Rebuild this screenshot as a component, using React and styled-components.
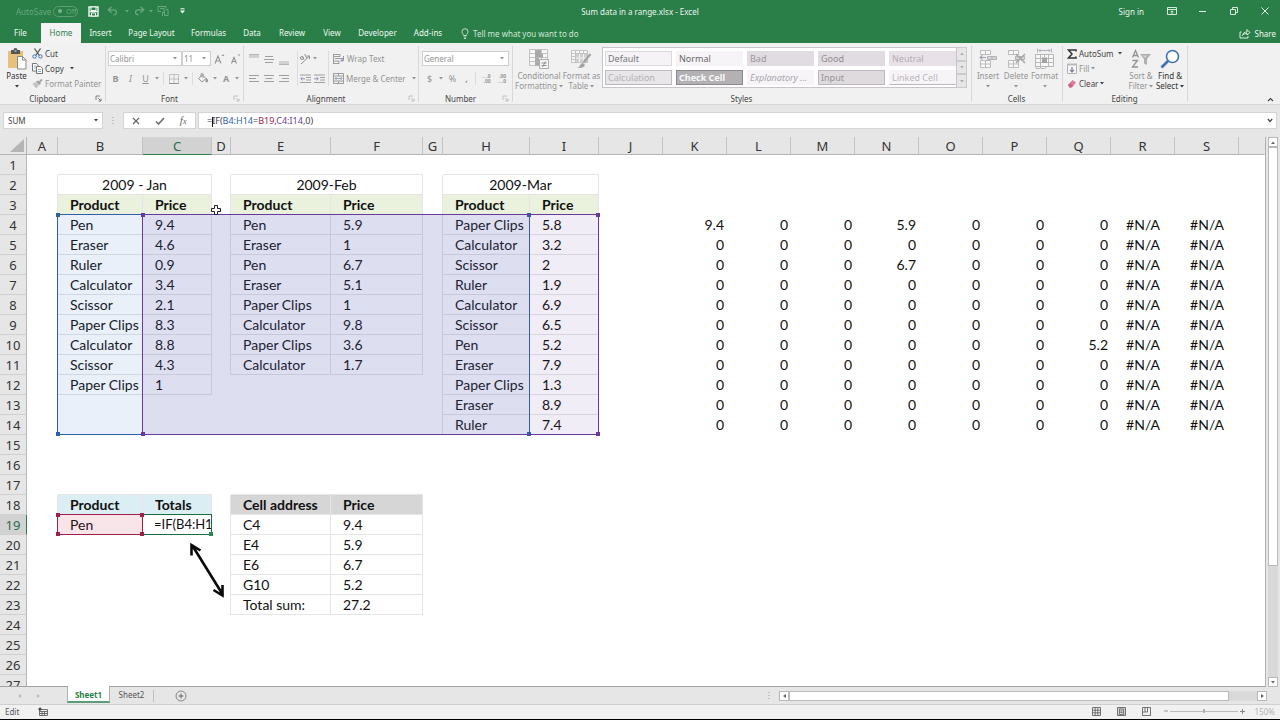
import React, { useState } from 'react';
import styled, { createGlobalStyle, css } from 'styled-components';

const GREEN = '#2a7f48';
const UI_FONT = '"Noto Sans", "Open Sans", sans-serif';
const CELL_FONT = 'Lato, "Open Sans", sans-serif';

const GlobalStyle = createGlobalStyle`
  * { box-sizing: border-box; }
  body {
    margin: 0;
    background: #000;
    font-family: ${UI_FONT};
    font-size: 8px;
    color: #444;
  }
  button, input, select { font: inherit; color: inherit; margin: 0; }
  button { border: none; background: none; padding: 0; cursor: pointer; white-space: nowrap; }
  svg { display: block; flex: none; }
`;

const Window = styled.div`
  display: flex;
  flex-direction: column;
  height: 100vh;
  border-bottom: 1px solid #000;
  background: #e6e6e6;
  overflow: hidden;
`;

/* ---------- title bar ---------- */

const TitleBar = styled.header`
  display: grid;
  grid-template-columns: 1fr auto 1fr;
  align-items: center;
  height: 23px;
  padding-bottom: 1px;
  flex: none;
  background: ${GREEN};
  color: #eaf5ee;
`;

const QuickAccess = styled.div`
  display: flex;
  align-items: center;
  padding-left: 16px;
  color: #69a87e;
`;

const QuickButton = styled.button`
  display: flex;
  align-items: center;
  justify-content: center;
  width: ${p => p.$w || 14}px;
  height: 14px;
  color: ${p => p.$on ? '#f2faf5' : '#69a87e'};
`;

const AutoSave = styled.label`
  display: flex;
  align-items: center;
  gap: 2px;
  margin-right: 8px;
`;

const Toggle = styled.button`
  display: flex;
  align-items: center;
  gap: 4px;
  width: 25px;
  height: 11px;
  padding-left: 4px;
  border: 1px solid #5b9f72;
  border-radius: 6px;
  font-size: 7px;
  line-height: 9px;
  &::before {
    content: '';
    width: 4px;
    height: 4px;
    border-radius: 50%;
    background: #7cb48e;
  }
`;

const WindowButtons = styled.div`
  display: flex;
  justify-content: flex-end;
  align-items: center;
`;

const WindowButton = styled.button`
  display: flex;
  align-items: center;
  justify-content: center;
  width: 31px;
  height: 20px;
`;

const SignIn = styled.a`
  margin-right: 12px;
  color: inherit;
  text-decoration: none;
`;

/* ---------- ribbon tabs ---------- */

const TabBar = styled.nav`
  display: flex;
  height: 20px;
  flex: none;
  background: ${GREEN};
  color: #eef8f1;
`;

const Tab = styled.button`
  width: ${p => p.$w}px;
  height: 20px;
  line-height: 20px;
  text-align: center;
  ${p => p.$active && css`
    background: #f3f3f3;
    color: ${GREEN};
  `}
`;

const TellMe = styled.button`
  display: flex;
  align-items: center;
  gap: 4px;
  margin-left: 10px;
  color: #cfe6d7;
`;

const Share = styled.button`
  display: flex;
  align-items: center;
  gap: 4px;
  margin-left: auto;
  padding-right: 4px;
`;

/* ---------- ribbon ---------- */

const Ribbon = styled.section`
  display: flex;
  flex: none;
  height: 62px;
  background: #f1f1f1;
  border-bottom: 1px solid #d6d6d6;
`;

const Group = styled.div`
  display: flex;
  flex-direction: column;
  flex: none;
  width: ${p => p.$w}px;
  position: relative;
  &::after {
    content: '';
    position: absolute;
    right: 0;
    top: 3px;
    bottom: 2px;
    width: 1px;
    background: #d8d8d8;
  }
`;

const GroupBody = styled.div`
  display: flex;
  flex: 1;
  min-height: 0;
  padding: 3px 0 0 ${p => p.$left || 2}px;
`;

const GroupFooter = styled.div`
  display: flex;
  align-items: center;
  height: 11px;
  padding: 0 2px 0 0;
  span { flex: 1; text-align: center; }
`;

const Launcher = styled.button`
  width: 9px;
  height: 9px;
  color: ${p => p.$on ? '#666' : '#b5b5b5'};
`;

const Stack = styled.div`
  display: flex;
  flex-direction: column;
  width: ${p => p.$w ? `${p.$w}px` : 'auto'};
  padding-left: ${p => p.$pad || 0}px;
`;

const SmallButton = styled.button`
  display: flex;
  align-items: center;
  gap: 2px;
  height: 15px;
  color: ${p => p.$off ? '#939393' : '#444'};
`;

const LargeButton = styled.button`
  display: flex;
  flex-direction: column;
  align-items: center;
  width: ${p => p.$w}px;
  height: 46px;
  line-height: 10px;
  color: ${p => p.$off ? '#939393' : '#333'};
`;

const LargeIcon = styled.span`
  display: flex;
  align-items: center;
  height: 25px;
`;

const Line = styled.span`
  display: flex;
  align-items: center;
  gap: 2px;
  height: 10px;
`;

const TwoRows = styled.div`
  display: grid;
  grid-template-rows: 15px 15px;
  row-gap: 5px;
  margin-top: 5px;
  height: 35px;
  width: ${p => p.$w ? `${p.$w}px` : 'auto'};
  ${p => p.$divided && css`
    border-left: 1px solid #dcdcdc;
    padding-left: ${p.$pad || 0}px;
  `}
`;

const Row = styled.div`
  display: flex;
  align-items: center;
`;

const Tool = styled.button`
  display: flex;
  align-items: center;
  justify-content: center;
  width: ${p => p.$w || 15}px;
  height: 15px;
  color: #959595;
  font-size: 9px;
  font-weight: ${p => p.$bold ? 700 : 400};
  font-style: ${p => p.$italic ? 'italic' : 'normal'};
  text-decoration: ${p => p.$underline ? 'underline' : 'none'};
`;

const Divider = styled.i`
  width: 1px;
  height: 13px;
  margin: 0 2px;
  background: #dcdcdc;
`;

const ComboWrap = styled.label`
  display: flex;
  align-items: center;
  width: ${p => p.$w}px;
  height: 15px;
  padding-right: 4px;
  border: 1px solid #cfcfcf;
  background: #fff;
  color: #939393;
  select {
    flex: 1;
    min-width: 0;
    height: 13px;
    padding: 0 0 0 1px;
    border: none;
    background: none;
    appearance: none;
    outline: none;
  }
`;

const Gallery = styled.div`
  display: grid;
  grid-template-columns: repeat(5, 67px);
  grid-template-rows: 15px 15px;
  gap: 4px;
  width: 355px;
  height: 41px;
  margin: 1px 0 0 2px;
  padding: 3px 2px;
  border: 1px solid #c9c3cb;
  background: #fff;
`;

const StyleSwatch = styled.button`
  padding-left: 2px;
  border: 1px solid ${p => p.$border || p.$bg};
  background: ${p => p.$bg};
  color: ${p => p.$color};
  font-size: 9px;
  line-height: 12px;
  text-align: left;
  font-weight: ${p => p.$bold ? 700 : 400};
  font-style: ${p => p.$italic ? 'italic' : 'normal'};
  ${p => p.$linked && css`border-bottom: 1px solid #bdb6bf;`}
`;

const GalleryScroll = styled.div`
  display: grid;
  grid-template-rows: repeat(3, 1fr);
  width: 10px;
  height: 41px;
  margin-top: 1px;
  button {
    display: flex;
    align-items: center;
    justify-content: center;
    border: 1px solid #cbcbcb;
    border-left: none;
    background: #e6e6e6;
    color: #b0b0b0;
  }
`;

const CollapseButton = styled.button`
  align-self: flex-end;
  margin: 0 6px 2px auto;
`;

/* ---------- formula bar ---------- */

const FormulaBar = styled.section`
  display: flex;
  align-items: center;
  flex: none;
  height: 32px;
  padding: 0 3px 1px;
`;

const NameBox = styled.div`
  display: flex;
  align-items: center;
  width: 100px;
  height: 17px;
  padding-right: 4px;
  border: 1px solid #d4d4d4;
  background: #fff;
  input {
    width: 0;
    flex: 1;
    padding: 0 4px;
    border: none;
    background: none;
    outline: none;
  }
`;

const Dots = styled.span`
  width: 20px;
  text-align: center;
  color: #999;
  svg { margin: 0 auto; }
`;

const FormulaButtons = styled.div`
  display: flex;
  width: 73px;
  height: 17px;
  border: 1px solid #d4d4d4;
  background: #fff;
  color: #666;
  button {
    display: flex;
    align-items: center;
    justify-content: center;
    flex: 1;
  }
  i {
    font-family: "Liberation Serif", serif;
    font-size: 11px;
    line-height: 13px;
  }
  small { font-size: 8px; }
`;

const FormulaBox = styled.div`
  display: flex;
  align-items: center;
  flex: 1;
  height: 17px;
  margin-left: 2px;
  padding: 0 3px 0 8px;
  border: 1px solid #d4d4d4;
  background: #fff;
`;

const FormulaText = styled.div`
  flex: 1;
  outline: none;
  white-space: pre;
  font-size: 9px;
  line-height: 15px;
`;

const Ref = styled.span`
  color: ${p => p.$color};
`;

const TextCaret = styled.i`
  display: inline-block;
  width: 1px;
  height: 10px;
  margin-right: -1px;
  background: #111;
  vertical-align: middle;
`;

/* ---------- sheet ---------- */

const Workspace = styled.main`
  display: flex;
  flex: 1;
  min-height: 0;
`;

const Canvas = styled.div`
  position: relative;
  flex: 1;
  min-width: 0;
  overflow: hidden;
  background: #fff;
  border-bottom: 1px solid #a3a3a3;
`;

const Grid = styled.table`
  width: 100%;
  table-layout: fixed;
  border-collapse: separate;
  border-spacing: 0;
  font-family: ${CELL_FONT};
  font-size: 14px;
  line-height: 19px;
  color: #111;
`;

const Corner = styled.td`
  height: 18px;
  padding: 0;
  background: #e6e6e6;
  border-right: 1px solid #b5b5b5;
  border-bottom: 1px solid #b5b5b5;
  svg { margin: 0 2px 1px auto; }
`;

const ColHead = styled.th`
  height: 18px;
  padding: 1px 0 0;
  background: ${p => p.$active ? '#d2d2d2' : '#e6e6e6'};
  border-right: 1px solid ${p => p.$last ? '#e6e6e6' : '#c2c2c2'};
  border-bottom: 1px solid ${p => p.$active ? GREEN : '#b5b5b5'};
  color: ${p => p.$active ? '#2b6b49' : '#333'};
  font-family: ${UI_FONT};
  font-size: 13px;
  line-height: 16px;
  font-weight: 400;
`;

const RowHead = styled.th`
  height: 20px;
  padding: 1px 0 0;
  background: ${p => p.$active ? '#d2d2d2' : '#e6e6e6'};
  border-right: 1px solid ${p => p.$active ? GREEN : '#b5b5b5'};
  border-bottom: 1px solid #d0d0d0;
  color: ${p => p.$active ? '#2b6b49' : '#333'};
  font-family: ${UI_FONT};
  font-size: 13px;
  line-height: 18px;
  font-weight: 400;
`;

const Cell = styled.td`
  height: 20px;
  padding: 0 ${p => p.$align === 'right' ? 3 : 0}px 0 ${p => p.$align ? 0 : p.$editing ? 11 : 12}px;
  border-bottom: 1px solid transparent;
  overflow: hidden;
  white-space: nowrap;
  text-align: ${p => p.$align || 'left'};
  font-size: ${p => p.$editing ? 13 : 14}px;
  font-weight: ${p => p.$bold ? 700 : 400};
  background: ${p => p.$bg || 'transparent'};
  ${p => p.$boxed && css`
    border-right: 1px solid #e5e5e5;
    border-bottom: 1px solid #e5e5e5;
    box-shadow: -1px 0 0 #e5e5e5, 0 -1px 0 #e5e5e5;
  `}
`;

const Overlay = styled.div`
  position: absolute;
  inset: 0;
  display: grid;
  grid-template-columns: ${p => p.$cols};
  grid-template-rows: 18px;
  grid-auto-rows: 20px;
  pointer-events: none;
`;

const Range = styled.div`
  position: relative;
  grid-area: ${p => p.$area};
  margin: -1px 0 0 -1px;
  border: 1px solid ${p => p.$color};
  background: ${p => p.$fill};
`;

const Handle = styled.i`
  position: absolute;
  width: 4px;
  height: 4px;
  background: ${p => p.$color};
  ${p => p.$at.includes('t') ? 'top: -2px;' : 'bottom: -2px;'}
  ${p => p.$at.includes('l') ? 'left: -2px;' : 'right: -2px;'}
`;

const ArrowShape = styled.svg`
  position: absolute;
  left: 186px;
  top: 403px;
`;

const Pointer = styled.svg`
  position: absolute;
  left: 210px;
  top: 67px;
`;

const VScroll = styled.div`
  display: flex;
  flex-direction: column;
  width: 15px;
  flex: none;
  padding: 0 3px 0 2px;
  border-left: 1px solid #b0b0b0;
`;

const ScrollButton = styled.button`
  display: flex;
  align-items: center;
  justify-content: center;
  width: 10px;
  height: 10px;
  flex: none;
  border: 1px solid #b9b9b9;
  background: #fff;
  color: #666;
`;

const VTrack = styled.div`
  flex: 1;
  width: 10px;
  background: #d9d9d9;
`;

const VThumb = styled.div`
  height: 79%;
  background: #fff;
  border: 1px solid #b9b9b9;
`;

/* ---------- bottom bars ---------- */

const SheetBar = styled.div`
  display: flex;
  flex: none;
  height: 18px;
  border-bottom: 1px solid #cfcfcf;
`;

const SheetNav = styled.div`
  display: flex;
  align-items: center;
  gap: 16px;
  width: 67px;
  padding-left: 18px;
  color: #bcbcbc;
`;

const SheetTab = styled.button`
  width: 43px;
  height: 16px;
  line-height: 16px;
  color: #555;
  ${p => p.$active && css`
    background: #fff;
    margin-top: -1px;
    height: 17px;
    padding-top: 2px;
    line-height: 13px;
    position: relative;
    border: 1px solid #b0b0b0;
    border-top: none;
    border-bottom: 2px solid #5c9c76;
    color: ${GREEN};
    font-weight: 700;
  `}
`;

const TabEnd = styled.i`
  width: 1px;
  height: 12px;
  margin: 3px 21px 0 0;
  background: #c0c0c0;
`;

const HScroll = styled.div`
  display: flex;
  align-items: center;
  width: 512px;
  margin-left: auto;
  padding-right: 13px;
`;

const HTrack = styled.div`
  flex: 1;
  height: 10px;
  background: #d9d9d9;
`;

const HThumb = styled.div`
  width: 94%;
  height: 10px;
  background: #fff;
  border: 1px solid #b9b9b9;
`;

const StatusBar = styled.footer`
  display: flex;
  align-items: center;
  flex: none;
  height: 14px;
  padding: 0 5px 2px;
  background: #f1f1f1;
  color: #555;
`;

const StatusRight = styled.div`
  display: flex;
  align-items: center;
  margin-left: auto;
`;

const ViewButton = styled.button`
  display: flex;
  align-items: center;
  justify-content: center;
  width: 25px;
  height: 12px;
  margin-left: ${p => p.$gap || 0}px;
`;

const ZoomControl = styled.div`
  display: flex;
  align-items: center;
  gap: 2px;
  margin: 0 10px 0 5px;
`;

const ZoomSlider = styled.input`
  width: 68px;
  height: 8px;
  padding: 0;
  appearance: none;
  background: linear-gradient(#bbb, #bbb) center / 100% 1px no-repeat;
  &::-webkit-slider-thumb {
    appearance: none;
    width: 2px;
    height: 4px;
    background: #b0b0b0;
  }
`;

const ZoomLabel = styled.span`
  color: #b5b5b5;
`;

/* ---------- icons ---------- */

const Svg = ({ w = 12, h = w, children, ...rest }) => (
  <svg width={w} height={h} viewBox={`0 0 ${w} ${h}`} fill="none" stroke="currentColor" aria-hidden="true" {...rest}>
    {children}
  </svg>
);

const Caret = () => <Svg w={4} h={3}><path d="M0 0h4L2 2.5z" fill="currentColor" stroke="none" /></Svg>;

const UndoIcon = ({ flip }) => (
  <Svg w={11} h={10}>
    <g transform={flip ? 'translate(11 0) scale(-1 1)' : undefined}>
      <path d="M4.5.8 1.3 3.8l3.2 3M1.5 3.8h5c2 0 3 1 3 2.4S8.300 8.800 6.500 9" strokeWidth="1.2" />
    </g>
  </Svg>
);

const SaveIcon = () => (
  <Svg w={11}>
    <path d="M1 1h9v9H1z" strokeWidth="1.4" />
    <path d="M3 1h5v3.500H3zM3.500 7h4v3h-4z" fill={GREEN} strokeWidth="1" />
    <path d="M1.500 5.500h8" strokeWidth="1.500" />
  </Svg>
);

const TouchIcon = () => (
  <Svg w={12}>
    <path d="M1 1.500h8v2M1 1.500v5h3M3 3.500h4v4H5M9 4.500h2v6H7.500V6M5.500 7.500V11" />
  </Svg>
);

const LauncherIcon = () => (
  <Svg w={7}><path d="M1 5V1h4M3 3l3 3M6 3.500V6H3.500" strokeWidth=".8" /></Svg>
);

const PasteIcon = () => (
  <Svg w={20} h={22}>
    <path d="M1 3h15v17H1z" fill="#e5c17c" stroke="none" />
    <path d="M4 2h2.500a2 2 0 0 1 4 0H13v4H4z" fill="#555" stroke="none" />
    <path d="M7.500 2.500h2v1h-2z" fill="#eee" stroke="none" />
    <path d="M10.500 8.500h5l3.500 3.500v9h-8.500z" fill="#fff" stroke="#8a8a8a" />
    <path d="M15.500 8.500V12H19" stroke="#8a8a8a" />
  </Svg>
);

const CutIcon = () => (
  <Svg w={11}>
    <path d="M2.500.5 7.300 7.500M8.500.5 3.700 7.500" stroke="#555" strokeWidth="1.300" />
    <circle cx="2.500" cy="8.500" r="1.700" stroke="#3e77ad" />
    <circle cx="8.500" cy="8.500" r="1.700" stroke="#3e77ad" />
  </Svg>
);

const CopyIcon = () => (
  <Svg w={11}>
    <path d="M.5.500h4l1.500 2V8H.500z" fill="#fff" stroke="#666" strokeWidth=".9" />
    <path d="M4.500 3.500H8.500l2 2v5h-6z" fill="#fff" stroke="#666" strokeWidth=".9" />
    <path d="M2 3h2M2 5h2M6 6.500h3M6 8.500h3" stroke="#6f9ac4" strokeWidth=".8" />
  </Svg>
);

const PainterIcon = () => (
  <Svg w={11} h={10}>
    <path d="M.5 4.500 4 3l3 3-2.500 3.500C3 8 2 7 .5 4.500z" fill="#c4c4c4" stroke="none" />
    <path d="M4 2.500 6 1.500 9 4.500 7.500 6z" fill="#9e9e9e" stroke="none" />
    <path d="m7.500 3 2.500-2.500" stroke="#a5a5a5" strokeWidth="1.800" />
  </Svg>
);

const FontStep = ({ down }) => (
  <Svg w={11} h={12}>
    <path d={down ? 'M1.500 10.500 4 4.500l2.500 6M2.500 8.500h3' : 'M1 10.500 4 3l3 7.500M2 8h4'} strokeWidth="1.100" />
    <path d={down ? 'M7.500 1.500h3L9 3z' : 'M7.500 3 9 1.200 10.500 3z'} fill="currentColor" stroke="none" />
  </Svg>
);

const BorderIcon = () => (
  <Svg w={10}><path d="M.5.500h9v9h-9zM5 .5v9M.5 5h9" strokeDasharray="1 1" /><path d="M0 9.500h10" /></Svg>
);

const BucketIcon = () => (
  <Svg w={12} h={11}>
    <path d="M1.500 5.500 5.500 2l3.500 3.500L5 9zM4 4V.800h2V5" />
    <path d="M9.500 5.500c1.500 2 1.500 3 .500 3.500s-1.500-.500-.500-3.500z" fill="currentColor" />
  </Svg>
);

const VAlign = ({ at }) => (
  <Svg w={10} h={12}>
    {at === 'middle'
      ? <path d="M1 3.500h8M0 6.500h10M1 9.500h8" strokeWidth=".9" />
      : <path d={at === 'top' ? 'M0 1h10v4H0z' : 'M0 8h10v4H0z'} fill="#d0d0d0" stroke="none" />}
    {at === 'top' && <path d="M0 1.500h10" stroke="#b5b5b5" />}
    {at === 'bottom' && <path d="M0 11.500h10" stroke="#b5b5b5" />}
  </Svg>
);

const HALIGN = {
  left: 'M0 1.500h10M0 4.500h7M0 7.500h10',
  center: 'M0 1.500h10M1.500 4.500h7M0 7.500h10',
  right: 'M0 1.500h10M3 4.500h7M0 7.500h10',
};

const HAlign = ({ at }) => <Svg w={10} h={9}><path d={HALIGN[at]} strokeWidth=".9" /></Svg>;

const OrientIcon = () => (
  <Svg w={12}>
    <path d="M2 11 10.500 3M7.500 3h3v3" />
    <circle cx="3" cy="5" r="1.500" />
    <path d="M4.800 6.500 3.500 3.500M5.500 1l2.500 4.500" />
  </Svg>
);

const IndentIcon = ({ more }) => (
  <Svg w={11} h={10}>
    <path d="M0 1h11M6 3.500h5M6 6h5M0 8.500h11" strokeWidth=".9" />
    <path d={more ? 'M0 4.800h4M2.500 3l1.800 1.800L2.500 6.500' : 'M1 4.800h4M2.500 3 .8 4.800l1.700 1.700'} stroke="#8c95b8" />
  </Svg>
);

const WrapIcon = () => (
  <Svg w={12}>
    <path d="M.5 1v10M0 1.500h7v2H1M2 5.500h8.500M1 8h5v2.500H1" strokeWidth=".9" />
    <path d="M10.500 3v4.500H8M9.500 6 8 7.500 9.500 9" stroke="#8c95b8" />
  </Svg>
);

const MergeIcon = () => (
  <Svg w={11}>
    <path d="M.5.500h10v10H.500zM.5 3h10M.5 8h10M5.500.500V3M5.500 8v2.500" strokeWidth=".9" />
    <path d="M2 5.500h7M3.500 4 2 5.500 3.500 7M7.500 4 9 5.500 7.500 7" stroke="#8c95b8" strokeWidth=".8" />
  </Svg>
);

const DecimalText = styled.span`
  display: flex;
  flex-direction: column;
  font-size: 5px;
  font-weight: 700;
  line-height: 5px;
  text-align: right;
`;

const CondIcon = () => (
  <Svg w={20} h={22}>
    <path d="M.5 1.500h18v16H.500zM6.500 1.500v16M12.500 1.500v16M.5 5.500h18M.5 9.500h18M.5 13.500h18" stroke="#c2c2c2" fill="#f7f7f7" />
    <path d="M6 2h6v4H6zM6 6h8v3.500H6zM6 10h4v3.500H6zM6 14h5v3.500H6z" fill="#a9a9a9" stroke="none" />
    <path d="M10.500 11.500h9v9h-9z" fill="#f5f5f5" stroke="#aaa" />
    <path d="M12.500 15h5M12.500 17.500h5M16.500 13.500l-3 5.500" stroke="#888" strokeWidth=".9" />
  </Svg>
);

const TableIcon = () => (
  <Svg w={21} h={20}>
    <path d="M.5 1.500h16v12H.500zM4.500 1.500v12M8.500 1.500v12M12.500 1.500v12M.5 4.500h16M.5 7.500h16M.5 10.500h16" stroke="#c2c2c2" fill="#f7f7f7" />
    <path d="M5 5h11v8H5z" fill="#d0d0d0" stroke="none" />
    <path d="M8.500 5v8.500M12.500 5v8.500M5 9h11" stroke="#f1f1f1" />
    <path d="m19.500 5-7 8.500" stroke="#a3a3a3" strokeWidth="2.200" />
    <path d="M6 19c3 0 3-5 6-5l2 2c-1 3-5 3-8 3z" fill="#a3a3a3" stroke="none" />
  </Svg>
);

const CellsIcon = ({ del }) => (
  <Svg w={20} h={20}>
    <path d="M2.500 1.500h10v4h-10zM7.500 1.500v4M2.500 11.500h10v7h-10zM7.500 11.500v7M2.500 15h10" stroke="#bbb" fill="#f8f8f8" />
    <path d="M9.500 7.500h9v3h-9zM14 7.500v3" fill="#d5d5d9" stroke="#b2b2b8" />
    {del
      ? <path d="m10 5 9 9M19 5l-9 9" stroke="#a8a8a8" strokeWidth="1.600" />
      : <path d="M2 8.500h6M4.500 6.500 2 8.500l2.500 2" stroke="#9fa5b5" strokeWidth="1.100" />}
  </Svg>
);

const FormatIcon = () => (
  <Svg w={20} h={22}>
    <path d="M2.500.500v4M16.500.500v4M4 2.500h11M5.500 1 4 2.500 5.500 4M13.500 1 15 2.500 13.500 4" stroke="#a8adb8" strokeWidth=".9" />
    <path d="M.5 6.500h18v12H.500zM5.500 6.500v14M13.500 6.500v12M.5 10.500h18M.5 14.500h18M1 18.500v2h4M9.500 6.500V9M6 20.500h4l1.500-2" stroke="#b8b8b8" fill="#f8f8f8" />
    <path d="M7 9.500h5V15H7z" fill="#a3a3a3" stroke="none" />
  </Svg>
);

const SigmaIcon = () => (
  <Svg w={10}><path d="M9 2.500V1H1.500L5 5 1.500 9H9V7.500" stroke="#333" strokeWidth="1.500" /></Svg>
);

const FillIcon = () => (
  <Svg w={10} h={11}>
    <path d="M.5 1.500h9v9h-9z" fill="#f8f8f8" stroke="#b5b5b5" />
    <path d="M0 1.500h10" strokeWidth="2" stroke="#b8b8b8" />
    <path d="M5 4v5M3 6.800l2 2 2-2" stroke="#777f95" strokeWidth="1.200" />
  </Svg>
);

const EraserIcon = () => (
  <Svg w={10}>
    <path d="m1 6 4.500-5L9 3.500 4.500 8.500H2.500z" fill="#dd7c96" stroke="none" />
    <path d="M1 6 3.500 4l3 2.500-2 2h-2z" fill="#c96484" stroke="none" />
  </Svg>
);

const SortIcon = () => (
  <Svg w={21} h={20}>
    <path d="M1.500 8.500 4.500 1.500l3 7M2.500 6.500h4" strokeWidth="1.300" />
    <path d="M1.500 11.500h5L1.500 18h5.500" strokeWidth="1.300" />
    <path d="M9 5h11l-4 5v6l-3-1.500V10z" fill="#b0b0b0" stroke="none" />
    <path d="M11.500 6.500h5L14 9z" fill="#d4d4d4" stroke="none" />
  </Svg>
);

const FindIcon = () => (
  <Svg w={20} h={20}>
    <circle cx="12.500" cy="7.500" r="6" stroke="#3f72b0" strokeWidth="1.600" fill="#fcfdff" />
    <path d="m8 12-6.500 6.500" stroke="#3f72b0" strokeWidth="2.600" />
  </Svg>
);

const BulbIcon = () => (
  <Svg w={8} h={11}>
    <path d="M2.500 7.500C2.500 6 1 5.500 1 3.700a3 3 0 0 1 6 0C7 5.500 5.500 6 5.500 7.500zM2.700 9h2.600M3 10.500h2" strokeWidth=".9" />
  </Svg>
);

const ShareIcon = () => (
  <Svg w={12} h={11}>
    <path d="M2.500 4H1v6h8V8M3.500 7.500C4 5 5.500 4 8 4V1.500L11 4.500 8 7V5.500C6 5.500 4.500 6 3.500 7.500z" strokeWidth=".9" />
  </Svg>
);

/* ---------- sheet data ---------- */

const COLUMNS = [
  ['A', 31], ['B', 85], ['C', 69], ['D', 19], ['E', 100], ['F', 92], ['G', 20], ['H', 87], ['I', 69],
  ['J', 64], ['K', 64], ['L', 64], ['M', 64], ['N', 64], ['O', 64], ['P', 64], ['Q', 64], ['R', 64], ['S', 64],
];
const ROW_COUNT = 27;
const OVERLAY_COLS = `27px ${COLUMNS.map(c => `${c[1]}px`).join(' ')} 1fr`;

const cells = {};

const putTable = (cols, top, head, bg, rows) => {
  [head, ...rows].forEach((values, r) => {
    values.forEach((text, c) => {
      cells[cols[c] + (top + r)] = { text, boxed: true, bold: r === 0, bg: r === 0 ? bg : '#fff' };
    });
  });
};

const putMonth = (cols, title, rows) => {
  cells[`${cols[0]}2`] = { text: title, boxed: true, align: 'center', span: 2 };
  cells[`${cols[1]}2`] = { hidden: true };
  putTable(cols, 3, ['Product', 'Price'], '#eaf1dd', rows);
};

putMonth('BC', '2009 - Jan', [
  ['Pen', 9.4], ['Eraser', 4.6], ['Ruler', 0.9], ['Calculator', 3.4], ['Scissor', 2.1],
  ['Paper Clips', 8.3], ['Calculator', 8.8], ['Scissor', 4.3], ['Paper Clips', 1],
]);
putMonth('EF', '2009-Feb', [
  ['Pen', 5.9], ['Eraser', 1], ['Pen', 6.7], ['Eraser', 5.1], ['Paper Clips', 1],
  ['Calculator', 9.8], ['Paper Clips', 3.6], ['Calculator', 1.7],
]);
putMonth('HI', '2009-Mar', [
  ['Paper Clips', 5.8], ['Calculator', 3.2], ['Scissor', 2], ['Ruler', 1.9], ['Calculator', 6.9], ['Scissor', 6.5],
  ['Pen', 5.2], ['Eraser', 7.9], ['Paper Clips', 1.3], ['Eraser', 8.9], ['Ruler', 7.4],
]);
putTable('BC', 18, ['Product', 'Totals'], '#daeef3', [['Pen', '=IF(B4:H1']]);
cells.C19.editing = true;
putTable('EF', 18, ['Cell address', 'Price'], '#d6d6d6', [
  ['C4', 9.4], ['E4', 5.9], ['E6', 6.7], ['G10', 5.2], ['Total sum:', 27.2],
]);

const MATCHES = { K4: 9.4, N4: 5.9, N6: 6.7, Q10: 5.2 };
for (let r = 4; r <= 14; r++) {
  'KLMNOPQ'.split('').forEach(c => {
    cells[c + r] = { text: MATCHES[c + r] || 0, align: 'right' };
  });
  cells[`R${r}`] = { text: '#N/A', align: 'center' };
  cells[`S${r}`] = { text: '#N/A', align: 'center' };
}

const TABS = [
  ['File', 41], ['Home', 40], ['Insert', 39], ['Page Layout', 63], ['Formulas', 51], ['Data', 36],
  ['Review', 44], ['View', 36], ['Developer', 55], ['Add-ins', 46],
];

const CELL_STYLES = [
  { name: 'Default', $bg: '#f6f3f7', $border: '#ded9e0', $color: '#777' },
  { name: 'Normal', $bg: '#f7f4f8', $color: '#666' },
  { name: 'Bad', $bg: '#e1dce1', $color: '#9a949b' },
  { name: 'Good', $bg: '#e1dce1', $color: '#918b92' },
  { name: 'Neutral', $bg: '#e8e2e8', $color: '#b3acb5' },
  { name: 'Calculation', $bg: '#e9e6e9', $border: '#bfbbc0', $color: '#b5b0b6' },
  { name: 'Check Cell', $bg: '#b3b1b3', $border: '#8b898b', $color: '#fafafa', $bold: true },
  { name: 'Explanatory ...', $bg: '#f7f4f8', $color: '#aaa5ac', $italic: true },
  { name: 'Input', $bg: '#dedade', $border: '#bcb8bd', $color: '#989399' },
  { name: 'Linked Cell', $bg: '#f7f4f8', $color: '#bdb6bf', $linked: true },
];

/* ---------- parts ---------- */

const Footer = ({ label, launcher, on }) => (
  <GroupFooter>
    <span>{label}</span>
    {launcher && <Launcher $on={on} aria-label={`${label} settings`}><LauncherIcon /></Launcher>}
  </GroupFooter>
);

const Combo = ({ label, value, w }) => (
  <ComboWrap $w={w}>
    <select aria-label={label} defaultValue={value}><option>{value}</option></select>
    <Caret />
  </ComboWrap>
);

const CaretTool = ({ label }) => <Tool $w={8} aria-label={`${label} options`}><Caret /></Tool>;

const RibbonPanel = () => (
  <Ribbon>
    <Group $w={106}>
      <GroupBody $left={4}>
        <LargeButton $w={25}>
          <LargeIcon><PasteIcon /></LargeIcon>
          <Line>Paste</Line>
          <Line><Caret /></Line>
        </LargeButton>
        <Stack $pad={3}>
          <SmallButton><CutIcon />Cut</SmallButton>
          <SmallButton><CopyIcon />Copy&nbsp;&nbsp;<Caret /></SmallButton>
          <SmallButton $off><PainterIcon />Format Painter</SmallButton>
        </Stack>
      </GroupBody>
      <Footer label="Clipboard" launcher on />
    </Group>

    <Group $w={138}>
      <GroupBody>
        <TwoRows>
          <Row>
            <Combo label="Font" value="Calibri" w={74} />
            <Combo label="Font size" value="11" w={29} />
            <Tool $w={17} aria-label="Increase font size"><FontStep /></Tool>
            <Tool $w={14} aria-label="Decrease font size"><FontStep down /></Tool>
          </Row>
          <Row>
            <Tool $bold>B</Tool>
            <Tool $italic>I</Tool>
            <Tool $underline>U</Tool>
            <CaretTool label="Underline" />
            <Divider />
            <Tool $w={16} aria-label="Borders"><BorderIcon /></Tool>
            <CaretTool label="Borders" />
            <Divider />
            <Tool $w={16} aria-label="Fill color"><BucketIcon /></Tool>
            <CaretTool label="Fill color" />
            <Tool $w={14} $bold>A</Tool>
            <CaretTool label="Font color" />
          </Row>
        </TwoRows>
      </GroupBody>
      <Footer label="Font" launcher />
    </Group>

    <Group $w={175}>
      <GroupBody>
        <TwoRows $w={51}>
          <Row>{['top', 'middle', 'bottom'].map(a => <Tool key={a} aria-label={`Align ${a}`}><VAlign at={a} /></Tool>)}</Row>
          <Row>{['left', 'center', 'right'].map(a => <Tool key={a} aria-label={`Align ${a}`}><HAlign at={a} /></Tool>)}</Row>
        </TwoRows>
        <TwoRows $divided $w={31}>
          <Row>
            <Tool $w={13} aria-label="Orientation"><OrientIcon /></Tool>
            <CaretTool label="Orientation" />
          </Row>
          <Row>
            <Tool $w={14} aria-label="Decrease indent"><IndentIcon /></Tool>
            <Tool $w={14} aria-label="Increase indent"><IndentIcon more /></Tool>
          </Row>
        </TwoRows>
        <TwoRows $divided $pad={4}>
          <SmallButton $off><WrapIcon />Wrap Text</SmallButton>
          <SmallButton $off><MergeIcon />Merge &amp; Center&nbsp;&nbsp;<Caret /></SmallButton>
        </TwoRows>
      </GroupBody>
      <Footer label="Alignment" launcher />
    </Group>

    <Group $w={94}>
      <GroupBody $left={3}>
        <TwoRows>
          <Row><Combo label="Number format" value="General" w={87} /></Row>
          <Row>
            <Tool>$</Tool>
            <CaretTool label="Currency" />
            <Tool>%</Tool>
            <Tool $w={13} $bold>,</Tool>
            <Divider />
            <Tool $w={16} aria-label="Increase decimal"><DecimalText><span>←.0</span><span>.00</span></DecimalText></Tool>
            <Tool aria-label="Decrease decimal"><DecimalText><span>.00</span><span>→.0</span></DecimalText></Tool>
          </Row>
        </TwoRows>
      </GroupBody>
      <Footer label="Number" launcher />
    </Group>

    <Group $w={459}>
      <GroupBody>
        <LargeButton $w={48} $off>
          <LargeIcon><CondIcon /></LargeIcon>
          <Line>Conditional</Line>
          <Line>Formatting<Caret /></Line>
        </LargeButton>
        <LargeButton $w={37} $off>
          <LargeIcon><TableIcon /></LargeIcon>
          <Line>Format as</Line>
          <Line>Table<Caret /></Line>
        </LargeButton>
        <Gallery>
          {CELL_STYLES.map(({ name, ...look }) => <StyleSwatch key={name} {...look}>{name}</StyleSwatch>)}
        </Gallery>
        <GalleryScroll>
          <button aria-label="Previous styles"><Svg w={4} h={3}><path d="M0 3h4L2 .5z" fill="currentColor" stroke="none" /></Svg></button>
          <button aria-label="Next styles"><Caret /></button>
          <button aria-label="More styles"><Caret /></button>
        </GalleryScroll>
      </GroupBody>
      <Footer label="Styles" />
    </Group>

    <Group $w={91}>
      <GroupBody>
        <LargeButton $w={28} $off><LargeIcon><CellsIcon /></LargeIcon><Line>Insert</Line><Line><Caret /></Line></LargeButton>
        <LargeButton $w={28} $off><LargeIcon><CellsIcon del /></LargeIcon><Line>Delete</Line><Line><Caret /></Line></LargeButton>
        <LargeButton $w={29} $off><LargeIcon><FormatIcon /></LargeIcon><Line>Format</Line><Line><Caret /></Line></LargeButton>
      </GroupBody>
      <Footer label="Cells" />
    </Group>

    <Group $w={125}>
      <GroupBody $left={4}>
        <Stack $w={60}>
          <SmallButton><SigmaIcon />AutoSum&nbsp;<Caret /></SmallButton>
          <SmallButton $off><FillIcon />Fill<Caret /></SmallButton>
          <SmallButton><EraserIcon />Clear<Caret /></SmallButton>
        </Stack>
        <LargeButton $w={28} $off>
          <LargeIcon><SortIcon /></LargeIcon>
          <Line>Sort &amp;</Line>
          <Line>Filter<Caret /></Line>
        </LargeButton>
        <LargeButton $w={30}>
          <LargeIcon><FindIcon /></LargeIcon>
          <Line>Find &amp;</Line>
          <Line>Select<Caret /></Line>
        </LargeButton>
      </GroupBody>
      <Footer label="Editing" />
    </Group>

    <CollapseButton aria-label="Collapse the ribbon"><Svg w={7} h={5}><path d="m1 4 2.500-2.500L6 4" strokeWidth="1.200" /></Svg></CollapseButton>
  </Ribbon>
);

const SheetGrid = () => (
  <Grid>
    <colgroup>
      <col style={{ width: 27 }} />
      {COLUMNS.map(([name, w]) => <col key={name} style={{ width: w }} />)}
      <col />
    </colgroup>
    <thead>
      <tr>
        <Corner><Svg w={14} h={13}><path d="M14 0v13H0z" fill="#b5b5b5" stroke="none" /></Svg></Corner>
        {COLUMNS.map(([name]) => <ColHead key={name} $active={name === 'C'}>{name}</ColHead>)}
        <ColHead $last />
      </tr>
    </thead>
    <tbody>
      {Array.from({ length: ROW_COUNT }, (_, i) => i + 1).map(row => (
        <tr key={row}>
          <RowHead $active={row === 19}>{row}</RowHead>
          {COLUMNS.map(([name]) => {
            const cell = cells[name + row] || {};
            if (cell.hidden) return null;
            return (
              <Cell
                key={name}
                colSpan={cell.span}
                $boxed={cell.boxed}
                $bold={cell.bold}
                $bg={cell.bg}
                $align={cell.align}
                $editing={cell.editing}
              >
                {cell.text}
              </Cell>
            );
          })}
          <Cell />
        </tr>
      ))}
    </tbody>
  </Grid>
);

const BLUE = '#2f5fa8';
const PURPLE = '#68399b';
const RED = '#a01f4a';

const Ranges = () => (
  <Overlay $cols={OVERLAY_COLS}>
    <Range $area="5 / 3 / 16 / 10" $color={BLUE} $fill="rgba(68, 114, 196, 0.11)">
      {['tl', 'tr', 'bl', 'br'].map(at => <Handle key={at} $at={at} $color={BLUE} />)}
    </Range>
    <Range $area="5 / 4 / 16 / 11" $color={PURPLE} $fill="rgba(100, 50, 160, 0.09)">
      {['tl', 'tr', 'bl', 'br'].map(at => <Handle key={at} $at={at} $color={PURPLE} />)}
    </Range>
    <Range $area="20 / 4 / 21 / 5" $color="#1e6b41" $fill="transparent">
      <Handle $at="br" $color="#2b8554" />
    </Range>
    <Range $area="20 / 3 / 21 / 4" $color={RED} $fill="rgba(192, 40, 80, 0.12)">
      {['tl', 'tr', 'bl', 'br'].map(at => <Handle key={at} $at={at} $color={RED} />)}
    </Range>
  </Overlay>
);

const App = () => {
  const [tab, setTab] = useState('Home');
  const [sheet, setSheet] = useState('Sheet1');
  const [nameBox, setNameBox] = useState('SUM');
  const [zoom, setZoom] = useState(50);

  return (
    <Window>
      <GlobalStyle />
      <TitleBar>
        <QuickAccess>
          <AutoSave>AutoSave<Toggle role="switch" aria-checked="false">Off</Toggle></AutoSave>
          <QuickButton $on aria-label="Save"><SaveIcon /></QuickButton>
          <QuickButton $w={25} aria-label="Undo"><UndoIcon /></QuickButton>
          <QuickButton $w={4} aria-label="Undo history"><Caret /></QuickButton>
          <QuickButton $w={20} aria-label="Redo"><UndoIcon flip /></QuickButton>
          <QuickButton $w={4} aria-label="Redo history"><Caret /></QuickButton>
          <QuickButton $w={20} aria-label="Touch mode"><TouchIcon /></QuickButton>
          <QuickButton $on $w={18} aria-label="Customize toolbar"><Svg w={5} h={6}><path d="M.5.800h4" /><path d="M0 2.500h5L2.500 5.500z" fill="currentColor" stroke="none" /></Svg></QuickButton>
        </QuickAccess>
        <span>Sum data in a range.xlsx - Excel</span>
        <WindowButtons>
          <SignIn href="#signin">Sign in</SignIn>
          <WindowButton aria-label="Ribbon display options"><Svg w={10} h={8}><path d="M.5.500h9v7h-9zM.5 2.500h9M5 7V4M3.500 5.300 5 3.800l1.500 1.500" strokeWidth=".9" /></Svg></WindowButton>
          <WindowButton aria-label="Minimize"><Svg w={8} h={8}><path d="M0 4.500h7" /></Svg></WindowButton>
          <WindowButton aria-label="Restore"><Svg w={8} h={8}><path d="M.5 2.500h5v5h-5zM2.500 2.500v-2h5v5h-2" strokeWidth=".9" /></Svg></WindowButton>
          <WindowButton aria-label="Close"><Svg w={8} h={8}><path d="m.5.500 7 7M7.500.500l-7 7" /></Svg></WindowButton>
        </WindowButtons>
      </TitleBar>

      <TabBar>
        {TABS.map(([name, w]) => (
          <Tab key={name} $w={w} $active={tab === name} onClick={() => setTab(name)}>{name}</Tab>
        ))}
        <TellMe><BulbIcon />Tell me what you want to do</TellMe>
        <Share><ShareIcon />Share</Share>
      </TabBar>

      <RibbonPanel />

      <FormulaBar>
        <NameBox>
          <input aria-label="Name box" value={nameBox} onChange={e => setNameBox(e.target.value)} />
          <button aria-label="Named ranges"><Caret /></button>
        </NameBox>
        <Dots><Svg w={2} h={8}><path d="M1 0v8" strokeDasharray="1 2" /></Svg></Dots>
        <FormulaButtons>
          <button aria-label="Cancel"><Svg w={8} h={8}><path d="m1 1 6 6M7 1 1 7" strokeWidth="1.200" /></Svg></button>
          <button aria-label="Enter"><Svg w={10} h={8}><path d="m1 4.500 2.500 2.500L9 1" strokeWidth="1.500" /></Svg></button>
          <button aria-label="Insert function"><i>f<small>x</small></i></button>
        </FormulaButtons>
        <FormulaBox>
          <FormulaText role="textbox" aria-label="Formula" contentEditable suppressContentEditableWarning spellCheck={false}>
            =<TextCaret />IF(<Ref $color={BLUE}>B4:H14</Ref>=<Ref $color={RED}>B19</Ref>,<Ref $color={PURPLE}>C4:I14</Ref>,0)
          </FormulaText>
          <button aria-label="Expand formula bar"><Svg w={6} h={5}><path d="m.800 1 2.200 2.500L5.200 1" strokeWidth="1.200" /></Svg></button>
        </FormulaBox>
      </FormulaBar>

      <Workspace>
        <Canvas>
          <SheetGrid />
          <Ranges />
          <ArrowShape width="42" height="60" viewBox="0 0 42 60" fill="none" stroke="#0a0a0a" strokeWidth="2.600" aria-hidden="true">
            <path d="m6 5 31 50M5.500 15.500V5l9 5.500M27.500 50l9 5.500V45" />
          </ArrowShape>
          <Pointer width="12" height="12" viewBox="0 0 12 12" fill="#fff" stroke="#222" aria-hidden="true">
            <path d="M4.500 1.500h3v3h3v3h-3v3h-3v-3h-3v-3h3z" />
          </Pointer>
        </Canvas>
        <VScroll>
          <ScrollButton aria-label="Scroll up"><Svg w={4} h={3}><path d="M0 3h4L2 .5z" fill="currentColor" stroke="none" /></Svg></ScrollButton>
          <VTrack><VThumb /></VTrack>
          <ScrollButton aria-label="Scroll down"><Caret /></ScrollButton>
        </VScroll>
      </Workspace>

      <SheetBar>
        <SheetNav>
          <Svg w={3} h={4}><path d="M3 0v4L0 2z" fill="currentColor" stroke="none" /></Svg>
          <Svg w={3} h={4}><path d="M0 0v4l3-2z" fill="currentColor" stroke="none" /></Svg>
        </SheetNav>
        {['Sheet1', 'Sheet2'].map(name => (
          <SheetTab key={name} $active={sheet === name} onClick={() => setSheet(name)}>{name}</SheetTab>
        ))}
        <TabEnd />
        <button aria-label="New sheet"><Svg w={12}><circle cx="6" cy="6" r="5" stroke="#888" /><path d="M6 3.500v5M3.500 6h5" stroke="#666" /></Svg></button>
        <HScroll>
          <Svg w={11} h={8}><path d="M1 0v8" strokeDasharray="1 2" stroke="#999" /></Svg>
          <ScrollButton aria-label="Scroll left"><Svg w={3} h={4}><path d="M3 0v4L0 2z" fill="currentColor" stroke="none" /></Svg></ScrollButton>
          <HTrack><HThumb /></HTrack>
          <ScrollButton aria-label="Scroll right"><Svg w={3} h={4}><path d="M0 0v4l3-2z" fill="currentColor" stroke="none" /></Svg></ScrollButton>
        </HScroll>
      </SheetBar>

      <StatusBar>
        <span>Edit</span>
        <ViewButton $gap={11} aria-label="Record macro"><Svg w={10} h={9}><path d="M1.500 2.500h8v6h-8zM1.500 4.500h8M4 4.500v4M6.500 4.500v4M1.500 6.500h8" strokeWidth=".8" /><circle cx="2" cy="2" r="1.600" fill="#444" stroke="none" /></Svg></ViewButton>
        <StatusRight>
          <ViewButton aria-label="Normal view"><Svg w={9}><path d="M.5.500h8v8h-8zM3.200.500v8M5.800.500v8M.5 3.200h8M.5 5.800h8" strokeWidth=".8" /></Svg></ViewButton>
          <ViewButton aria-label="Page layout view"><Svg w={9}><path d="M.5.500h8v8h-8z" fill="#d0d0d0" strokeWidth=".8" /><path d="M2.500 2h4v5.500h-4zM3.500 4h2M3.500 5.500h2" strokeWidth=".7" /></Svg></ViewButton>
          <ViewButton aria-label="Page break view"><Svg w={9}><path d="M.5.500h8v8h-8zM3 .5v4.500M5.500.500V5M.5 5h5" strokeWidth=".8" /></Svg></ViewButton>
          <ZoomControl>
            <Svg w={4} h={4}><path d="M0 2h4" stroke="#999" /></Svg>
            <ZoomSlider type="range" aria-label="Zoom" value={zoom} onChange={e => setZoom(Number(e.target.value))} />
            <Svg w={5} h={5}><path d="M0 2.500h5M2.500 0v5" stroke="#888" /></Svg>
          </ZoomControl>
          <ZoomLabel>150%</ZoomLabel>
        </StatusRight>
      </StatusBar>
    </Window>
  );
};

export default App;
